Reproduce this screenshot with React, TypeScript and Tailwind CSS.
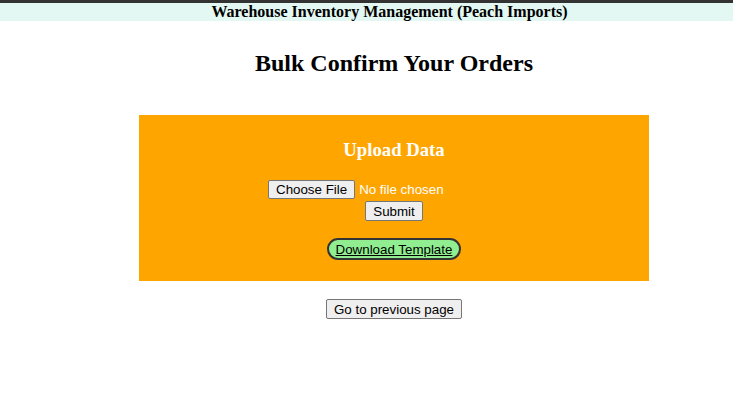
export default function App() {
  return (
    <div className="min-h-screen w-full overflow-hidden bg-white">
      <div className="w-[788px] font-['Liberation_Serif',serif] text-black">
        {/* Title bar */}
        <div className="border-t-[3px] border-[#333333] bg-[#e3f8f2] pr-[9px] text-center text-base font-bold leading-[18px]">
          Warehouse Inventory Management (Peach Imports)
        </div>

        <h2 className="mt-[28px] text-center text-2xl font-bold leading-[28px]">
          Bulk Confirm Your Orders
        </h2>

        {/* Upload panel */}
        <div className="mx-auto mt-[38px] flex w-[510px] flex-col items-center bg-[#ffa500] pt-[24px] pb-[21px]">
          <h3 className="text-[18.72px] font-bold leading-[22px] text-white">Upload Data</h3>

          <div className="mt-[19px] flex w-[252px] items-center font-['Liberation_Sans',sans-serif] text-[13.33px]">
            <button className="h-[19px] rounded-[2px] border border-[#767676] bg-[#efefef] px-[7px] leading-[15px] text-black">
              Choose File
            </button>
            <span className="ml-[4px] leading-[15px] text-white">No file chosen</span>
          </div>

          <button className="mt-[2px] h-[20px] rounded-[2px] border border-[#767676] bg-[#efefef] px-[7px] font-['Liberation_Sans',sans-serif] text-[13.33px] leading-[15px]">
            Submit
          </button>

          <button className="mt-[17px] h-[22px] rounded-full border-2 border-[#333333] bg-[#90ee90] px-[6.5px] font-['Liberation_Sans',sans-serif] text-[13.33px] leading-[15px] underline">
            Download Template
          </button>
        </div>

        <div className="mt-[18px] flex justify-center">
          <button className="h-[20px] rounded-[2px] border border-[#767676] bg-[#efefef] px-[7px] font-['Liberation_Sans',sans-serif] text-[13.33px] leading-[15px]">
            Go to previous page
          </button>
        </div>
      </div>
    </div>
  );
}
